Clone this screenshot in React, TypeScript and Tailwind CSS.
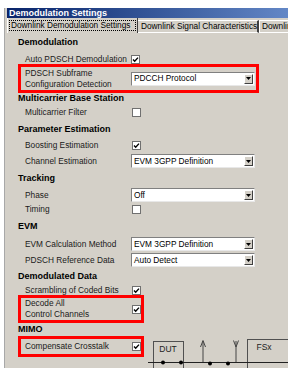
import type { ReactNode } from 'react';

const font = { fontFamily: '"Liberation Sans", Arial, sans-serif' };

function Check({ checked }: { checked?: boolean }) {
  return (
    <div className="flex h-[9px] w-[9px] shrink-0 items-center justify-center border border-[#707070] bg-white">
      {checked && (
        <svg width="7" height="7" viewBox="0 0 7 7">
          <path d="M1 3.5 L2.7 5.3 L6 1.6" fill="none" stroke="#000" strokeWidth="1.4" />
        </svg>
      )}
    </div>
  );
}

function Combo({ value }: { value: string }) {
  return (
    <div className="flex h-[14px] w-[124px] shrink-0 items-center border border-[#808080] border-r-[#e8e8e8] border-b-[#e8e8e8] bg-white">
      <span className="flex-1 truncate pl-[2px] text-[8.3px] leading-none text-black">{value}</span>
      <div className="mr-[1px] flex h-[10px] w-[9px] items-center justify-center border border-[#ffffff] border-r-[#404040] border-b-[#404040] bg-[#d4d0c8]">
        <svg width="5" height="3" viewBox="0 0 5 3">
          <path d="M0 0 H5 L2.5 3 Z" fill="#000" />
        </svg>
      </div>
    </div>
  );
}

function Heading({ children, h }: { children: ReactNode; h: string }) {
  return (
    <div className={`flex items-center pl-[11px] text-[9px] font-bold text-black ${h}`}>{children}</div>
  );
}

function Row({ label, h, control }: { label: ReactNode; h: string; control: ReactNode }) {
  return (
    <div className={`flex items-center pl-[18px] ${h}`}>
      <div className="w-[106px] shrink-0 whitespace-nowrap text-[8.3px] leading-[11px] text-[#1a1a1a]">{label}</div>
      {control}
    </div>
  );
}

function RedBox({ children, w, h }: { children: ReactNode; w: string; h: string }) {
  return (
    <div className={`ml-[11px] flex shrink-0 items-center border-[3px] border-[#ff0000] pl-[4px] ${w} ${h}`}>
      {children}
    </div>
  );
}

function Diagram() {
  return (
    <svg width="140" height="36" viewBox="148 336 140 36" className="ml-[4px] shrink-0 self-start overflow-visible">
      <rect x="153.5" y="341.5" width="30" height="30" fill="none" stroke="#505050" />
      <text x="168" y="352" textAnchor="middle" fontSize="8.5" fontFamily="Liberation Sans, Arial, sans-serif" fill="#222">DUT</text>
      <rect x="247.5" y="339.5" width="45" height="30" fill="none" stroke="#505050" />
      <text x="264" y="350" textAnchor="middle" fontSize="8.5" fontFamily="Liberation Sans, Arial, sans-serif" fill="#222">FSx</text>
      <line x1="148" y1="362.5" x2="288" y2="362.5" stroke="#222" strokeWidth="1.2" />
      <line x1="203" y1="341" x2="203" y2="362" stroke="#444" />
      <path d="M200.5 347 L203 340.5 L205.5 347" fill="none" stroke="#444" />
      <line x1="236" y1="341" x2="236" y2="362" stroke="#444" />
      <path d="M233.5 340.5 L236 347 L238.5 340.5" fill="none" stroke="#444" />
      <circle cx="163" cy="362.5" r="2" fill="#000" />
      <circle cx="181" cy="362.5" r="2" fill="#000" />
      <circle cx="210" cy="363.5" r="2" fill="#000" />
      <circle cx="228" cy="363.5" r="2" fill="#000" />
    </svg>
  );
}

export default function App() {
  return (
    <div className="h-[368px] w-[288px] overflow-hidden bg-white pt-[8px] pl-[4px]" style={font}>
      <div className="flex h-[360px] flex-col border-l border-[#a8a8a8] bg-[#d4d0c8] pl-[2px]">
        <div className="flex h-[10px] items-center whitespace-nowrap bg-gradient-to-r from-[#0a246a] to-[#6387c6] pl-[2px] text-[9px] font-bold leading-none text-white">
          Demodulation Settings
        </div>

        <div className="flex h-[15px] items-end overflow-hidden whitespace-nowrap">
          <div className="flex h-[15px] w-[131px] shrink-0 items-center border-l border-white border-r border-r-[#404040] pl-[1px]">
            <div className="flex h-[11px] w-[127px] items-center border border-dotted border-black pl-[1px] text-[8.3px] leading-none text-black">
              Downlink Demodulation Settings
            </div>
          </div>
          <div className="flex h-[13px] w-[121px] shrink-0 items-center border-t border-t-white border-b border-b-white border-r-2 border-r-[#404040] pl-[3px] text-[8.3px] leading-none text-black">
            Downlink Signal Characteristics
          </div>
          <div className="flex h-[13px] min-w-0 flex-1 items-center overflow-hidden border-t border-t-white border-l border-l-white border-b border-b-white pl-[2px] text-[8.3px] leading-none text-black">
            Downlink Signal Power
          </div>
        </div>

        <div className="flex flex-1 flex-col">
          <div className="h-[1px]" />
          <Heading h="h-[17px]">Demodulation</Heading>
          <Row h="h-[13px] pt-[3px]" label="Auto PDSCH Demodulation" control={<Check checked />} />
          <RedBox w="w-[241px]" h="h-[29px]">
            <div className="w-[106px] shrink-0 text-[8.3px] leading-[11px] text-[#1a1a1a]">
              PDSCH Subframe
              <br />
              Configuration Detection
            </div>
            <Combo value="PDCCH Protocol" />
          </RedBox>
          <Heading h="h-[12px]">Multicarrier Base Station</Heading>
          <Row h="h-[15px]" label="Multicarrier Filter" control={<div className="pl-[1px]"><Check /></div>} />
          <Heading h="h-[19px]">Parameter Estimation</Heading>
          <Row h="h-[13px]" label="Boosting Estimation" control={<div className="pl-[1px]"><Check checked /></div>} />
          <Row h="h-[18px]" label="Channel Estimation" control={<Combo value="EVM 3GPP Definition" />} />
          <Heading h="h-[18px]">Tracking</Heading>
          <Row h="h-[14px]" label="Phase" control={<Combo value="Off" />} />
          <Row h="h-[15px]" label="Timing" control={<div className="pl-[1px]"><Check /></div>} />
          <Heading h="h-[19px]">EVM</Heading>
          <Row h="h-[16px]" label="EVM Calculation Method" control={<Combo value="EVM 3GPP Definition" />} />
          <Row h="h-[16px]" label="PDSCH Reference Data" control={<Combo value="Auto Detect" />} />
          <Heading h="h-[18px]">Demodulated Data</Heading>
          <Row h="h-[9px]" label="Scrambling of Coded Bits" control={<div className="pl-[1px]"><Check checked /></div>} />
          <RedBox w="w-[126px]" h="h-[28px]">
            <div className="w-[107px] shrink-0 text-[8.3px] leading-[11px] text-[#1a1a1a]">
              Decode All
              <br />
              Control Channels
            </div>
            <Check checked />
          </RedBox>
          <Heading h="h-[13px]">MIMO</Heading>
          <div className="flex h-[21px] items-start overflow-visible">
            <RedBox w="w-[126px]" h="h-[21px]">
              <div className="w-[107px] shrink-0 text-[8.3px] leading-[11px] text-[#1a1a1a]">Compensate Crosstalk</div>
              <Check checked />
            </RedBox>
            <Diagram />
          </div>
        </div>
      </div>
    </div>
  );
}
